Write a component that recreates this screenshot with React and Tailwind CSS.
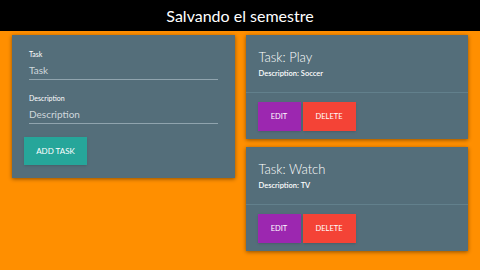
import React from "react";

const tasks = [
  { id: 1, title: "Play", description: "Soccer" },
  { id: 2, title: "Watch", description: "TV" },
];

const Field = ({ label, placeholder }) => (
  <div className="px-[5px]">
    <div className="text-[7px] leading-[9px] text-white">{label}</div>
    <div className="mt-[5px] h-[16px] border-b border-[#90a4ae] text-[10px] leading-[12px] text-[#cfd8dc]">
      {placeholder}
    </div>
  </div>
);

const TaskCard = ({ task }) => (
  <div className="h-[104px] bg-[#546e7a] shadow-[0_1px_4px_rgba(0,0,0,0.45)]">
    <div className="h-[58px] border-b border-[#62808c] px-[13px] pt-[14px]">
      <div className="text-[13px] font-light leading-[17px] text-white">
        Task: {task.title}
      </div>
      <div className="mt-[3px] text-[7.5px] font-semibold leading-[10px] text-white">
        Description: {task.description}
      </div>
    </div>
    <div className="flex gap-[2px] px-[12px] pt-[9px]">
      <button className="h-[29px] w-[43px] bg-[#9c27b0] text-[7.5px] text-white shadow">
        EDIT
      </button>
      <button className="h-[29px] w-[53px] bg-[#f44336] text-[7.5px] text-white shadow">
        DELETE
      </button>
    </div>
  </div>
);

export default function App() {
  return (
    <div
      className="h-[270px] w-[480px] overflow-hidden bg-[#ff8f00]"
      style={{ fontFamily: "Lato, 'Open Sans', sans-serif" }}
    >
      <div className="flex h-[31px] items-center justify-center bg-black text-[16px] text-white">
        Salvando el semestre
      </div>
      <div className="flex gap-[11px] px-[12px] pt-[4px]">
        <div className="h-[143px] w-[223px] bg-[#546e7a] px-[12px] pt-[15px] shadow-[0_1px_4px_rgba(0,0,0,0.45)]">
          <Field label="Task" placeholder="Task" />
          <div className="mt-[14px]">
            <Field label="Description" placeholder="Description" />
          </div>
          <button className="mt-[13px] h-[28px] w-[63px] bg-[#26a69a] text-[8px] text-white shadow">
            ADD TASK
          </button>
        </div>
        <div className="flex w-[223px] flex-col gap-[8px]">
          {tasks.map((task) => (
            <TaskCard key={task.id} task={task} />
          ))}
        </div>
      </div>
    </div>
  );
}
